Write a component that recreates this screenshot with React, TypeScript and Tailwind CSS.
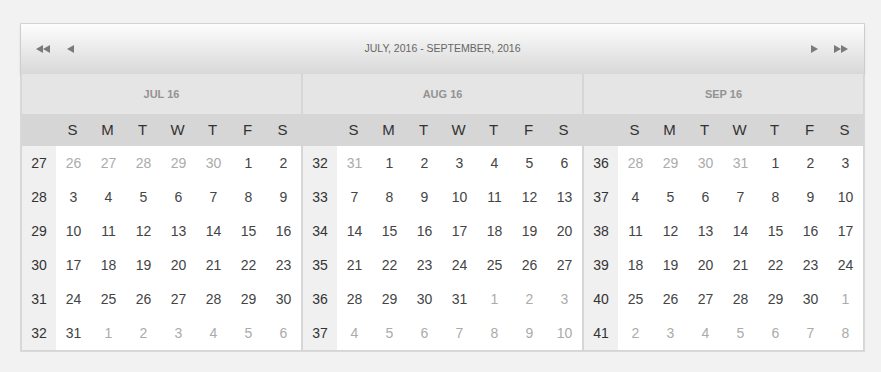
import React from "react";

type Day = { n: number; out: boolean };

const dayNames = ["S", "M", "T", "W", "T", "F", "S"];

// build 6 weeks starting from the first Sunday on or before the 1st
function buildMonth(year: number, month: number): Day[][] {
  const first = new Date(year, month, 1);
  const start = new Date(year, month, 1 - first.getDay());
  const weeks: Day[][] = [];
  for (let w = 0; w < 6; w++) {
    const row: Day[] = [];
    for (let d = 0; d < 7; d++) {
      const dt = new Date(start.getFullYear(), start.getMonth(), start.getDate() + w * 7 + d);
      row.push({ n: dt.getDate(), out: dt.getMonth() !== month });
    }
    weeks.push(row);
  }
  return weeks;
}

const months = [
  { title: "JUL 16", weeks: [27, 28, 29, 30, 31, 32], days: buildMonth(2016, 6) },
  { title: "AUG 16", weeks: [32, 33, 34, 35, 36, 37], days: buildMonth(2016, 7) },
  { title: "SEP 16", weeks: [36, 37, 38, 39, 40, 41], days: buildMonth(2016, 8) },
];

function Tri({ dir }: { dir: "l" | "r" }) {
  return (
    <svg width="7" height="8" viewBox="0 0 7 8" className="fill-[#7a7a7a]">
      {dir === "l" ? <path d="M0 4 L7 0 L7 8 Z" /> : <path d="M7 4 L0 0 L0 8 Z" />}
    </svg>
  );
}

function MonthPanel({ title, weeks, days }: { title: string; weeks: number[]; days: Day[][] }) {
  return (
    <div className="w-[279px] flex flex-col">
      {/* Month title */}
      <div className="h-[40px] bg-[#e5e5e5] flex items-center justify-center text-[11px] font-bold text-[#939393]">
        {title}
      </div>

      {/* Day names */}
      <div className="h-[32px] bg-[#d6d6d6] flex items-center">
        <div className="w-[33px]" />
        {dayNames.map((d, i) => (
          <div key={i} className="w-[35px] text-center text-[15px] text-[#333]">
            {d}
          </div>
        ))}
      </div>

      {/* Weeks */}
      <div className="flex">
        <div className="w-[34px] bg-[#f0f0f0] flex flex-col">
          {weeks.map((w) => (
            <div key={w} className="h-[34px] flex items-center justify-center text-[14px] text-[#333]">
              {w}
            </div>
          ))}
        </div>
        <div className="bg-white flex flex-col">
          {days.map((row, r) => (
            <div key={r} className="h-[34px] flex items-center">
              {row.map((d, i) => (
                <div
                  key={i}
                  className={
                    d.out
                      ? "w-[35px] text-center text-[14px] text-[#ababab]"
                      : "w-[35px] text-center text-[14px] text-[#444]"
                  }
                >
                  {d.n}
                </div>
              ))}
            </div>
          ))}
        </div>
      </div>
    </div>
  );
}

export default function App() {
  return (
    <div className="min-h-[372px] bg-[#f2f2f2] pt-[23px] pl-[20px] font-['Liberation_Sans',Arial,sans-serif]">
      <div className="w-[845px] border border-[#d9d9d9] bg-white">
        {/* Header */}
        <div className="h-[50px] bg-gradient-to-b from-[#fdfdfd] to-[#d8d8d8] shadow-[0_1px_3px_rgba(0,0,0,0.15)] flex items-center pl-[15px] pr-[16px]">
          <div className="flex items-center gap-[17px]">
            <span className="flex">
              <Tri dir="l" />
              <Tri dir="l" />
            </span>
            <Tri dir="l" />
          </div>
          <div className="flex-1 text-center text-[10.5px] text-[#666]">
            JULY, 2016 - SEPTEMBER, 2016
          </div>
          <div className="flex items-center gap-[16px]">
            <Tri dir="r" />
            <span className="flex">
              <Tri dir="r" />
              <Tri dir="r" />
            </span>
          </div>
        </div>

        {/* Month panels */}
        <div className="flex border-x border-b border-[#d6d6d6] bg-[#d6d6d6] gap-[2px]">
          {months.map((m) => (
            <MonthPanel key={m.title} title={m.title} weeks={m.weeks} days={m.days} />
          ))}
        </div>
      </div>
    </div>
  );
}
